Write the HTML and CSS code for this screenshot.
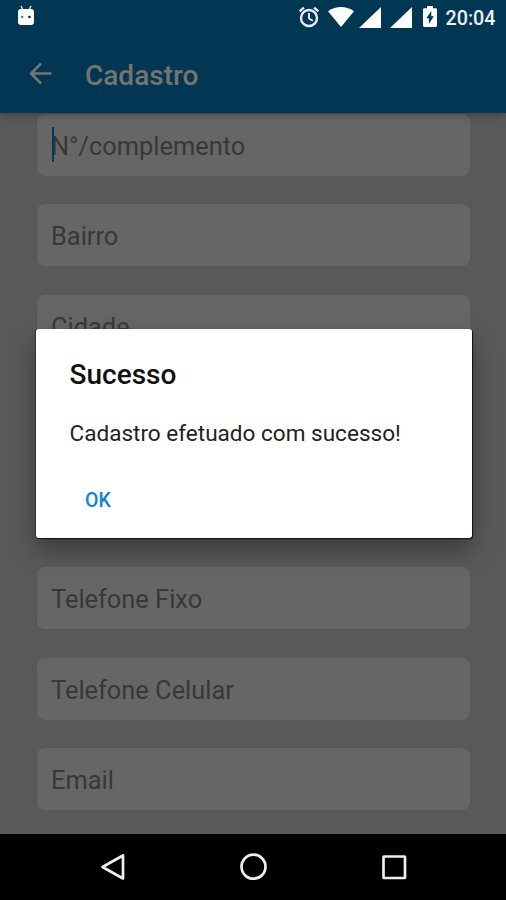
FILE: index.html
```html
<!DOCTYPE html>
<html lang="pt-BR">
<head>
<meta charset="utf-8">
<title>Cadastro</title>
<link rel="stylesheet" href="styles.css">
</head>
<body>
<div class="screen">
  <header class="header">
    <div class="status">
      <svg class="android" width="18" height="21" viewBox="0 0 18 21"><path d="M4 1l2 4M14 1l-2 4" stroke="#dce6f2" stroke-width="1.4"/><path d="M1 7q0-3 3-3h10q3 0 3 3v10q0 3-3 3H4q-3 0-3-3z" fill="#fff"/><circle cx="5.2" cy="12" r="1.2" fill="#6a7184"/><circle cx="12.4" cy="12" r="1.3" fill="#10182e"/></svg>
      <div class="indicators">
        <svg class="alarm" width="22" height="22" viewBox="0 0 22 22" fill="none" stroke="#e8eef4"><circle cx="11" cy="12" r="8" stroke-width="2.4"/><path d="M11 7v5.500l3.800 2.300" stroke-width="1.900"/><path d="M1.600 5.400l4.300-3.700M20.400 5.400l-4.300-3.700" stroke-width="2.300"/></svg>
        <svg class="wifi" width="26" height="20" viewBox="0 0 26 20"><path d="M0 4.200Q13-4 26 4.200L13 20z" fill="#fff"/></svg>
        <svg class="signal" width="22" height="21" viewBox="0 0 22 21"><path d="M22 0v21H0z" fill="#fff"/></svg>
        <svg class="signal second" width="22" height="21" viewBox="0 0 22 21"><path d="M22 0v21H0z" fill="#fff"/></svg>
        <svg class="battery" width="14" height="21" viewBox="0 0 14 21"><path d="M4 0h6v2.200h2.600Q14 2.200 14 3.600v16q0 1.400-1.400 1.400H1.400Q0 21 0 19.600V3.600Q0 2.200 1.400 2.200H4z" fill="#fff"/><path d="M8.300 5v5.200h2.500L5.900 18v-5.700H3.300z" fill="#023753"/></svg>
        <span class="clock">20:04</span>
      </div>
    </div>
    <div class="toolbar">
      <svg width="24" height="24" viewBox="0 0 24 24" fill="none" stroke="#77736f" stroke-width="2.500"><path d="M23.500 11.500H3M13 1.500L3 11.500 13 21.500"/></svg>
      <h1 class="title">Cadastro</h1>
    </div>
  </header>
  <main class="form">
    <div class="field focused">N°/complemento</div>
    <div class="field">Bairro</div>
    <div class="field">Cidade</div>
    <div class="field"></div>
    <div class="field"></div>
    <div class="field">Telefone Fixo</div>
    <div class="field">Telefone Celular</div>
    <div class="field">Email</div>
  </main>
  <nav class="nav">
    <svg width="28" height="28" viewBox="0 0 28 28"><path d="M24 2.500v23L3.500 14z"/></svg>
    <svg width="28" height="28" viewBox="0 0 28 28"><circle cx="13.500" cy="13.700" r="12"/></svg>
    <svg width="28" height="28" viewBox="0 0 28 28"><rect x="3.500" y="3.500" width="21.500" height="21.500" rx=".5"/></svg>
  </nav>
  <section class="dialog" role="dialog">
    <h2 class="dialog-title">Sucesso</h2>
    <p class="message">Cadastro efetuado com sucesso!</p>
    <button class="ok">OK</button>
  </section>
</div>
</body>
</html>
```

FILE: styles.css
```css
* { box-sizing: border-box; }
body { margin: 0; font-family: Roboto, "Liberation Sans", sans-serif; }
svg { display: block; flex: none; }
.screen { position: relative; width: 506px; height: 900px; display: flex; flex-direction: column; overflow: hidden; background: #595959; }
.header { height: 113px; flex: none; background: #023753; box-shadow: 0 1px 8px rgba(0, 0, 0, .35); z-index: 1; }
.status { height: 36px; display: flex; justify-content: space-between; padding: 0 10.500px 0 17px; }
.android { margin-top: 5px; }
.indicators { display: flex; align-items: flex-start; }
.alarm { margin-top: 6px; }
.wifi { margin: 7px 0 0 8px; }
.signal { margin: 7px 0 0 5px; }
.second { margin-left: 9px; }
.battery { margin: 6px 0 0 11px; }
.clock { margin-left: 8.500px; font-size: 19.700px; font-weight: 500; line-height: 37px; color: #e9eff5; }
.toolbar { height: 77px; display: flex; align-items: center; padding: 0 0 2px 28px; gap: 33px; }
.title { margin: 0; font-size: 28px; font-weight: 500; line-height: 36px; color: #77736f; padding-top: 4px; }
.form { flex: 1; min-height: 0; display: flex; flex-direction: column; gap: 28.700px; padding: .500px 36px 0 37px; overflow: hidden; }
.field { height: 62px; flex: none; border-radius: 8px; background: #666; color: #383838; font-size: 25.400px; line-height: 64px; padding-left: 14px; }
.focused { position: relative; }
.focused::before { content: ""; position: absolute; left: 14.500px; top: 13px; width: 2px; height: 35px; background: #04395a; }
.nav { height: 66.500px; flex: none; background: #000; display: flex; justify-content: space-between; align-items: center; padding: 0 98px 0 99px; }
.nav svg { fill: none; stroke: #eee; stroke-width: 2.700; stroke-linejoin: round; }
.dialog { position: absolute; z-index: 2; left: 35.500px; top: 329px; width: 436px; height: 209px; padding: 28px 34px; background: #fff; border-radius: 3px; box-shadow: 1px 1px 1px #111, -1px 0 1px #333, 0 12px 24px rgba(0, 0, 0, .35); }
.dialog-title { margin: 0; font-size: 28px; line-height: 36px; font-weight: 500; color: #111; }
.message { margin: 25px 0 0; font-size: 22.550px; line-height: 32px; color: #222; white-space: nowrap; }
.ok { display: block; margin: 39px 0 0; padding: 0 15.500px; border: 0; background: none; font: 500 19.500px/24px Roboto, sans-serif; color: #0b85d6; }
```
